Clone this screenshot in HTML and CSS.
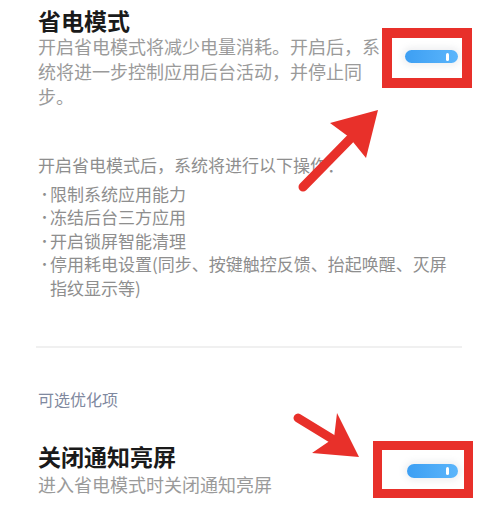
FILE: index.html
```html
<!DOCTYPE html>
<html lang="zh-CN">
<head>
    <meta charset="UTF-8">
    <meta name="viewport" content="width=device-width, initial-scale=1.0">
    <title>省电模式</title>
    <link rel="stylesheet" href="styles.css">
</head>
<body>
    <div class="page">
        <div class="setting setting-main">
            <div class="setting-text">
                <div class="setting-title">省电模式</div>
                <div class="setting-desc">开启省电模式将减少电量消耗。开启后，系统将进一步控制应用后台活动，并停止同步。</div>
            </div>
            <div class="frame frame-main">
                <div class="toggle"><span class="knob"></span></div>
            </div>
        </div>

        <div class="details">
            <p class="details-head">开启省电模式后，系统将进行以下操作：</p>
            <ul class="details-list">
                <li>限制系统应用能力</li>
                <li>冻结后台三方应用</li>
                <li>开启锁屏智能清理</li>
                <li>停用耗电设置(同步、按键触控反馈、抬起唤醒、灭屏指纹显示等)</li>
            </ul>
        </div>

        <div class="divider"></div>

        <div class="group-label">可选优化项</div>

        <div class="setting setting-sub">
            <div class="setting-text">
                <div class="setting-title">关闭通知亮屏</div>
                <div class="setting-desc">进入省电模式时关闭通知亮屏</div>
            </div>
            <div class="frame frame-sub">
                <div class="toggle toggle-sub"><span class="knob"></span></div>
            </div>
        </div>

        <!-- annotation arrows drawn over the page -->
        <svg class="arrows" width="500" height="505" viewBox="0 0 500 505">
            <line x1="303" y1="187" x2="350" y2="139" stroke="#e8302a" stroke-width="9" stroke-linecap="round"/>
            <polygon points="378,110 330,123 349,137 366,158" fill="#e8302a"/>
            <line x1="298" y1="418" x2="334" y2="440" stroke="#e8302a" stroke-width="9" stroke-linecap="round"/>
            <polygon points="359,457 337,413 334,438 312,453" fill="#e8302a"/>
        </svg>
    </div>
</body>
</html>
```

FILE: styles.css
```css
body {
    margin: 0;
    background-color: #ffffff;
    font-family: "Noto Sans CJK SC", "Noto Sans", sans-serif;
    overflow: hidden;
}

.page {
    position: relative;
    padding: 6px 38px 0 38px;
    height: 499px;
}

.setting {
    display: flex;
    align-items: center;
}

.setting-sub {
    align-items: flex-start;
}

.setting-text {
    flex: 1;
}

.setting-title {
    font-size: 23px;
    line-height: 28px;
    font-weight: 700;
    color: #1a1a1a;
}

.setting-desc {
    font-size: 18px;
    line-height: 25px;
    color: #9a9a9a;
}

.setting-sub .setting-desc {
    line-height: 28px;
}

.frame {
    border: 10px solid #e8302a;
    background-color: #ffffff;
}

.frame-main {
    padding: 12px 4px 15px 13px;
    margin-right: -10px;
}

.frame-sub {
    border-width: 9px;
    padding: 14px 6px 11px 25px;
    margin-top: -1px;
    margin-right: -11px;
}

.toggle {
    position: relative;
    width: 53px;
    height: 13px;
    border-radius: 7px;
    background: linear-gradient(90deg, #3d9ff3, #5bb5fb);
    box-shadow: 0 0 6px 3px rgba(120, 130, 150, 0.12);
}

.toggle-sub {
    width: 51px;
    height: 14px;
}

.knob {
    position: absolute;
    right: 9px;
    top: 3px;
    width: 3px;
    height: 8px;
    border-radius: 2px;
    background-color: #ffffff;
}

.details {
    margin-top: 44px;
    color: #8e8e8e;
    font-size: 17px;
    line-height: 23.5px;
}

.details-head {
    margin: 0 0 5px 0;
}

.details-list {
    list-style: none;
    margin: 0;
    padding: 0;
}

.details-list li {
    padding-left: 12px;
    text-indent: -12px;
}

.details-list li::before {
    content: "•";
    display: inline-block;
    vertical-align: top;
    width: 12px;
    height: 23.5px;
    line-height: 23.5px;
    text-indent: 0;
    font-size: 13px;
    color: #8e8e8e;
}

.divider {
    margin-top: 47px;
    margin-left: -2px;
    height: 2px;
    background-color: #f0f0f0;
}

.group-label {
    margin-top: 40px;
    margin-bottom: 32px;
    font-size: 16px;
    line-height: 22px;
    color: #7f89a0;
}

.arrows {
    position: absolute;
    left: 0;
    top: 0;
    pointer-events: none;
}
```
